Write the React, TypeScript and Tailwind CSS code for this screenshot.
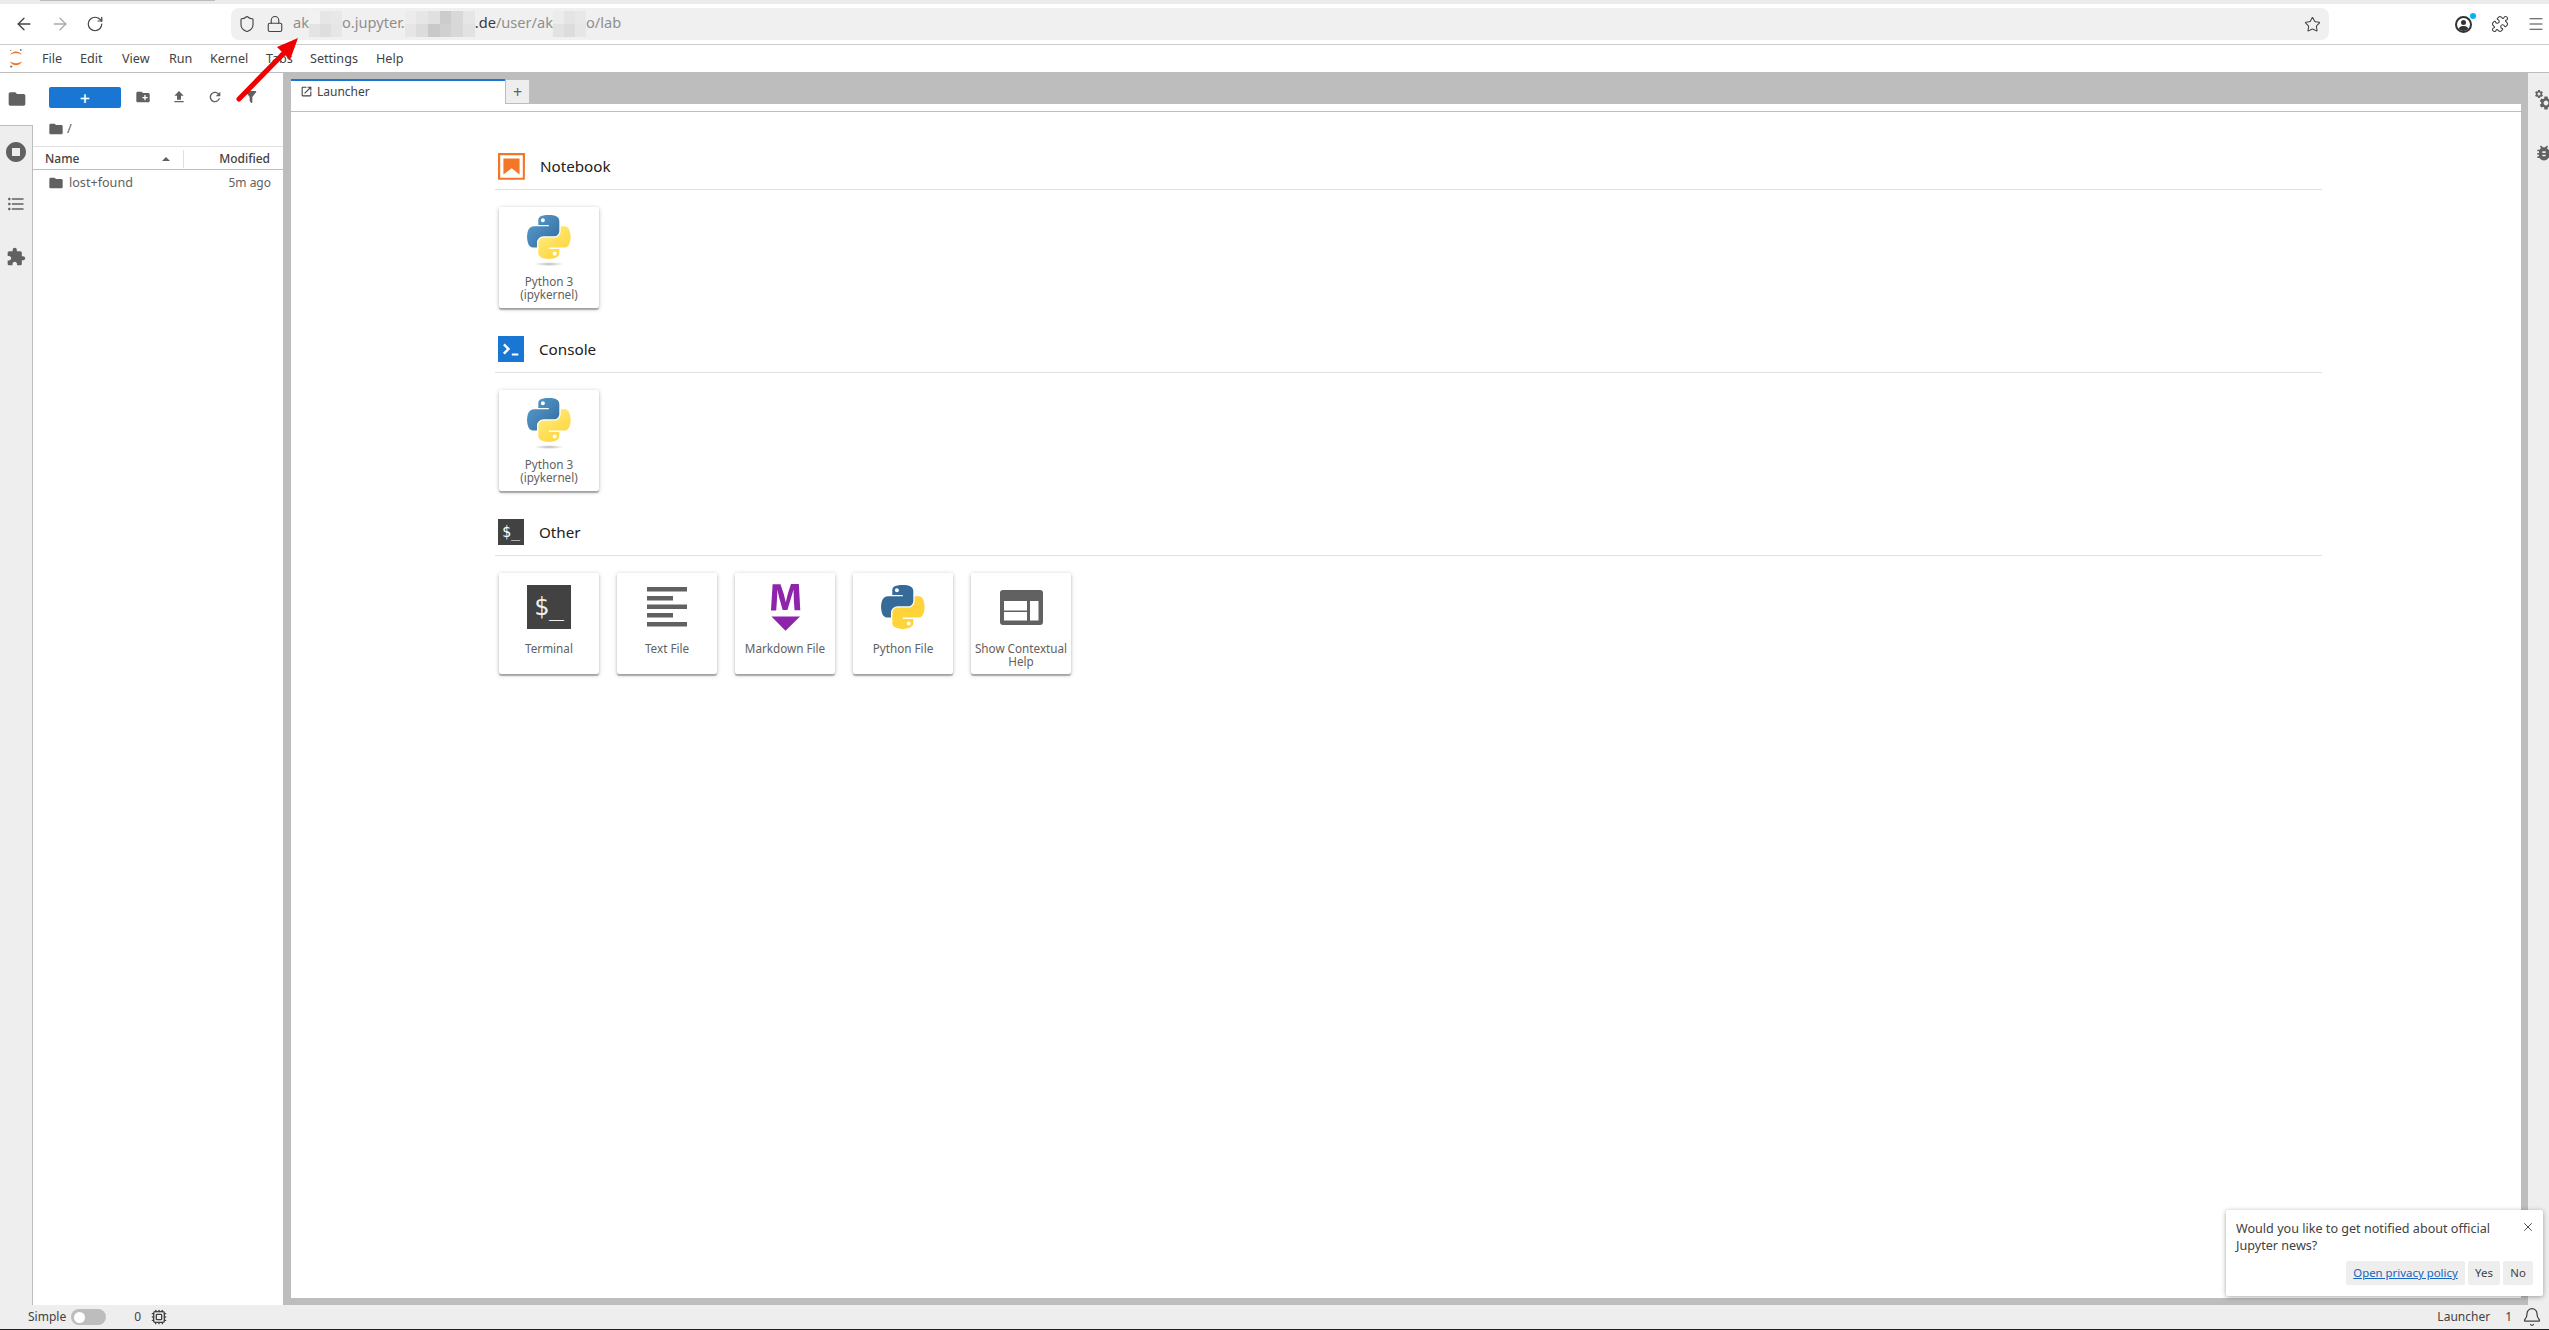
import {
  ArrowLeft,
  ArrowRight,
  Bell,
  Cpu,
  Lock,
  Menu,
  Puzzle,
  RotateCw,
  Shield,
  Star,
  X,
} from "lucide-react";
import { MdBugReport, MdSettings } from "react-icons/md";

const FOLDER = "M10 4H4c-1.1 0-1.99.9-1.99 2L2 18c0 1.1.9 2 2 2h16c1.1 0 2-.9 2-2V8c0-1.1-.9-2-2-2h-8l-2-2z";
const NEW_FOLDER = "M20 6h-8l-2-2H4c-1.11 0-1.99.89-1.99 2L2 18c0 1.11.89 2 2 2h16c1.11 0 2-.89 2-2V8c0-1.11-.89-2-2-2zm-1 8h-3v3h-2v-3h-3v-2h3V9h2v3h3v2z";
const UPLOAD = "M9 16h6v-6h4l-7-7-7 7h4v6zm-4 2h14v2H5v-2z";
const REFRESH = "M17.65 6.35C16.2 4.9 14.21 4 12 4c-4.42 0-7.99 3.58-7.99 8s3.57 8 7.99 8c3.73 0 6.84-2.55 7.73-6h-2.08c-.82 2.33-3.04 4-5.65 4-3.31 0-6-2.69-6-6s2.69-6 6-6c1.66 0 3.14.69 4.22 1.78L13 11h7V4l-2.35 2.35z";
const FILTER = "M14,12V19.88C14.04,20.18 13.94,20.5 13.71,20.71C13.32,21.1 12.69,21.1 12.3,20.71L10.29,18.7C10.06,18.47 9.96,18.16 10,17.87V12H9.97L4.21,4.62C3.87,4.19 3.95,3.56 4.38,3.22C4.57,3.08 4.78,3 5,3V3H19V3C19.22,3 19.43,3.08 19.62,3.22C20.05,3.56 20.13,4.19 19.79,4.62L14.03,12H14Z";
const STOP = "M12 2C6.48 2 2 6.48 2 12s4.48 10 10 10 10-4.48 10-10S17.52 2 12 2zm4 14H8V8h8v8z";
const LIST = "M4 10.5c-.83 0-1.5.67-1.5 1.5s.67 1.5 1.5 1.5 1.5-.67 1.5-1.5-.67-1.5-1.5-1.5zm0-6c-.83 0-1.5.67-1.5 1.5S3.17 7.5 4 7.5 5.5 6.83 5.5 6 4.83 4.5 4 4.5zm0 12c-.83 0-1.5.68-1.5 1.5s.68 1.5 1.5 1.5 1.5-.68 1.5-1.5-.67-1.5-1.5-1.5zM7 19h14v-2H7v2zm0-6h14v-2H7v2zm0-8v2h14V5H7z";
const EXTENSION = "M20.5 11H19V7c0-1.1-.9-2-2-2h-4V3.5C13 2.12 11.88 1 10.5 1S8 2.12 8 3.5V5H4c-1.1 0-1.99.9-1.99 2v3.8H3.5c1.49 0 2.7 1.21 2.7 2.7s-1.21 2.7-2.7 2.7H2V20c0 1.1.9 2 2 2h3.8v-1.5c0-1.49 1.21-2.7 2.7-2.7 1.49 0 2.7 1.21 2.7 2.7V22H17c1.1 0 2-.9 2-2v-4h1.5c1.38 0 2.5-1.12 2.5-2.5S21.88 11 20.5 11z";
const LAUNCH = "M19 19H5V5h7V3H5a2 2 0 00-2 2v14a2 2 0 002 2h14c1.1 0 2-.9 2-2v-7h-2v7zM14 3v2h3.59l-9.83 9.83 1.41 1.41L19 6.41V10h2V3h-7z";

const PY_BLUE = "M54.92 0C50.34.02 45.96.41 42.11 1.09 30.76 3.1 28.7 7.29 28.7 15.03v10.22h26.81v3.41H18.64c-7.79 0-14.62 4.68-16.75 13.59-2.46 10.21-2.57 16.58 0 27.24 1.91 7.93 6.46 13.59 14.25 13.59h9.22V70.83c0-8.85 7.66-16.66 16.75-16.66h26.78c7.46 0 13.41-6.14 13.41-13.62V15.03c0-7.26-6.13-12.71-13.41-13.94C64.28.33 59.5-.02 54.92 0zM40.42 8.22c2.77 0 5.03 2.3 5.03 5.12 0 2.82-2.26 5.1-5.03 5.1-2.78 0-5.03-2.28-5.03-5.1 0-2.82 2.25-5.12 5.03-5.12z";
const PY_YELLOW = "M85.64 28.66v11.9c0 9.23-7.83 17-16.75 17H42.11c-7.34 0-13.41 6.28-13.41 13.63v25.53c0 7.27 6.32 11.54 13.41 13.63 8.49 2.5 16.62 2.95 26.78 0 6.75-1.96 13.41-5.89 13.41-13.63V86.51H55.51v-3.4H95.7c7.79 0 10.7-5.44 13.41-13.6 2.8-8.4 2.68-16.47 0-27.23-1.93-7.75-5.6-13.62-13.41-13.62H85.64zM70.58 93.29c2.78 0 5.03 2.28 5.03 5.09 0 2.83-2.25 5.13-5.03 5.13-2.77 0-5.03-2.3-5.03-5.13 0-2.81 2.26-5.09 5.03-5.09z";

function Mat({ d, className }: { d: string; className: string }) {
  return (
    <svg viewBox="0 0 24 24" className={className} fill="currentColor">
      <path d={d} />
    </svg>
  );
}

function PythonLogo({ flat }: { flat?: boolean }) {
  return (
    <svg viewBox="0 0 112 130" className="w-[44px] h-[51px]">
      <defs>
        <linearGradient id="pyBlue" x1="0" y1="0" x2="1" y2="1">
          <stop offset="0" stopColor="#5a9fd4" />
          <stop offset="1" stopColor="#306998" />
        </linearGradient>
        <linearGradient id="pyYellow" x1="0.8" y1="0.9" x2="0.3" y2="0.2">
          <stop offset="0" stopColor="#ffd43b" />
          <stop offset="1" stopColor="#ffe873" />
        </linearGradient>
        <radialGradient id="pyShadow">
          <stop offset="0" stopColor="#b8b8b8" />
          <stop offset="1" stopColor="#ffffff" />
        </radialGradient>
      </defs>
      <path d={PY_BLUE} fill={flat ? "#366b99" : "url(#pyBlue)"} />
      <path d={PY_YELLOW} fill={flat ? "#ffd43b" : "url(#pyYellow)"} />
      {!flat && <ellipse cx="56" cy="125" rx="38" ry="5" fill="url(#pyShadow)" />}
    </svg>
  );
}

// pixelated patch that hides part of the url
function Blur({ className, cells }: { className: string; cells: string[] }) {
  return (
    <span className={`inline-grid h-[26px] align-middle ${className}`}>
      {cells.map((c, i) => (
        <span key={i} style={{ backgroundColor: c }} />
      ))}
    </span>
  );
}

function Card({ label, icon, top }: { label: string; icon: React.ReactNode; top: string }) {
  return (
    <div className="w-[100px] h-[101px] rounded-[2px] bg-white text-[#616161] shadow-[0_1px_4px_rgba(0,0,0,0.25),0_2px_1px_rgba(0,0,0,0.25)]">
      <div className={`flex justify-center ${top}`}>{icon}</div>
      <div className="text-[11.7px] leading-[13px] text-center">{label}</div>
    </div>
  );
}

function Section({
  title,
  icon,
  className,
  children,
}: {
  title: string;
  icon: React.ReactNode;
  className: string;
  children: React.ReactNode;
}) {
  return (
    <section className={`w-[1827px] mb-[28px] ${className}`}>
      <div className="h-[37px] pb-[10px] pl-[3px] flex items-center gap-[15px] border-b border-[#e0e0e0]">
        {icon}
        <span className="pt-px text-[15.2px] text-[#212121]">{title}</span>
      </div>
      <div className="mt-[17px] pl-[4px] flex gap-[18px]">{children}</div>
    </section>
  );
}

export default function App() {
  const python = <PythonLogo />;

  return (
    <div className="relative w-[2549px] h-[1330px] overflow-hidden flex flex-col bg-white font-['Noto_Sans',sans-serif] text-[#616161]">
      {/* browser chrome */}
      <div className="h-1 bg-[#ebebeb] pl-[40px]">
        <div className="w-[175px] h-px bg-[#bbbbbb]" />
      </div>
      <div className="h-[41px] flex items-center border-b border-[#cccccc] text-[#444]">
        <div className="w-[231px] pl-[14px] flex gap-[16px]">
          <ArrowLeft size={20} strokeWidth={1.6} />
          <ArrowRight size={20} strokeWidth={1.6} className="text-[#aaa]" />
          <RotateCw size={18} strokeWidth={1.6} className="mt-px" />
        </div>
        <div className="w-[2098px] h-8 rounded-[8px] bg-[#f0f0f0] flex items-center pl-[7px] pr-[8px]">
          <Shield size={18} strokeWidth={1.5} />
          <Lock size={18} strokeWidth={1.5} className="ml-[10px]" />
          <span className="ml-[9px] text-[14.6px] whitespace-nowrap text-[#8f8f8f]">
            ak
            <Blur className="w-[33px] grid-cols-3" cells={["#f2f2f2", "#e6e6e6", "#e8e8e8", "#e4e4e4", "#dedede", "#e6e6e6"]} />
            o.jupyter.
            <Blur
              className="w-[70px] grid-cols-6"
              cells={["#ececec", "#e6e6e6", "#e0e0e0", "#cccccc", "#d8d8d8", "#e6e6e6", "#e6e6e6", "#dcdcdc", "#c9c9c9", "#d0d0d0", "#d8d8d8", "#e2e2e2"]}
            />
            <span className="text-[#3a3a3a]">.de</span>/user/ak
            <Blur className="w-[33px] grid-cols-3" cells={["#ececec", "#e4e4e4", "#e8e8e8", "#e2e2e2", "#dcdcdc", "#e6e6e6"]} />
            o/lab
          </span>
          <Star size={17} strokeWidth={1.5} className="ml-auto" />
        </div>
        <div className="relative ml-[125px] w-5 h-5">
          <div className="w-[17px] h-[17px] mt-[2px] ml-px rounded-full border-2 border-[#333] flex flex-col items-center overflow-hidden">
            <div className="w-[5px] h-[5px] mt-[2px] rounded-full bg-[#333]" />
            <div className="w-[11px] h-[5px] mt-px rounded-t-full bg-[#333]" />
          </div>
          <div className="absolute -top-px right-[-2px] w-[6px] h-[6px] rounded-full bg-[#00b3f4]" />
        </div>
        <Puzzle size={18} strokeWidth={1.5} className="ml-[17px]" />
        <Menu size={18} strokeWidth={1.5} className="ml-[18px]" />
      </div>

      {/* jupyter menu */}
      <div className="h-[28px] flex items-center border-b border-[#bdbdbd] text-[12.6px] text-[#424242]">
        <svg viewBox="0 0 16 22" className="ml-2 mr-[18px] w-4 h-[21px]">
          <path d="M1.5 7.5C4 2.5 12 2.5 14.5 7.5 12 5 4 5 1.5 7.5z" fill="#f37726" />
          <path d="M1.5 14C4 19.5 12 19.5 14.5 14 12 16.5 4 16.5 1.5 14z" fill="#f37726" />
          <circle cx="13" cy="2" r="1" fill="#767677" />
          <circle cx="3" cy="19.5" r="1.2" fill="#767677" />
          <circle cx="2.5" cy="2.5" r=".6" fill="#767677" />
        </svg>
        <span className="w-[38px] pt-px">File</span>
        <span className="w-[42px] pt-px">Edit</span>
        <span className="w-[47px] pt-px">View</span>
        <span className="w-[41px] pt-px">Run</span>
        <span className="w-[56px] pt-px">Kernel</span>
        <span className="w-[44px] pt-px">Tabs</span>
        <span className="w-[66px] pt-px">Settings</span>
        <span className="pt-px">Help</span>
      </div>

      <div className="flex-1 min-h-0 flex">
        {/* activity bar */}
        <div className="w-[33px] flex flex-col">
          <div className="h-[52px] flex items-center justify-center">
            <Mat d={FOLDER} className="w-5 h-5" />
          </div>
          <div className="flex-1 bg-[#eeeeee] border-t border-r border-[#bdbdbd] flex flex-col items-center pt-[14px] gap-[29px] pr-px">
            <Mat d={STOP} className="w-6 h-6" />
            <Mat d={LIST} className="w-[20px] h-[20px] mt-px" />
            <Mat d={EXTENSION} className="w-5 h-5 mt-[4px]" />
          </div>
        </div>

        {/* file browser */}
        <div className="w-[250px] flex flex-col text-[12px]">
          <div className="h-[31px] mt-[14px] pl-[16px] flex items-start">
            <div className="w-[72px] h-[21px] rounded-[2px] bg-[#1976d2] text-white flex items-center justify-center text-[18px] leading-none font-medium">+</div>
            <Mat d={NEW_FOLDER} className="w-4 h-4 ml-[14px] mt-[2px]" />
            <Mat d={UPLOAD} className="w-4 h-4 ml-[20px] mt-[2px]" />
            <Mat d={REFRESH} className="w-4 h-4 ml-[20px] mt-[2px]" />
            <Mat d={FILTER} className="w-4 h-4 ml-[20px] mt-[2px]" />
          </div>
          <div className="h-[22px] mb-[6px] pl-[15px] flex items-center gap-[3px]">
            <Mat d={FOLDER} className="w-4 h-4" />
            <span className="text-[13px]">/</span>
          </div>
          <div className="h-[24px] pt-[2px] border-t border-b border-t-[#e0e0e0] border-b-[#bdbdbd] flex items-center text-[#424242]">
            <div className="w-[151px] h-[18px] pl-[12px] pr-[13px] flex items-center justify-between border-r border-[#e0e0e0]">
              <span className="font-medium">Name</span>
              <span className="w-0 h-0 border-x-[4px] border-x-transparent border-b-[4px] border-b-[#616161]" />
            </div>
            <span className="flex-1 pr-[13px] text-right font-medium">Modified</span>
          </div>
          <div className="h-[26px] pl-[15px] pr-[12px] flex items-center">
            <Mat d={FOLDER} className="w-4 h-4" />
            <span className="ml-[5px] text-[12.6px]">lost+found</span>
            <span className="ml-auto">5m ago</span>
          </div>
        </div>

        {/* main area */}
        <div className="flex-1 min-w-0 flex flex-col bg-[#bdbdbd] pl-[8px] pr-[7px] pb-[7px]">
          <div className="h-[31px] shrink-0 pt-[6px] flex">
            <div className="w-[214px] pb-[2px] bg-white border-t-2 border-[#1976d2] pl-[9px] flex items-center gap-[4px] text-[12px] text-[#424242]">
              <Mat d={LAUNCH} className="w-[13px] h-[13px]" />
              <span>Launcher</span>
            </div>
            <div className="w-[25px] bg-[#eeeeee] border border-[#bdbdbd] flex items-center justify-center text-[16px] leading-none">+</div>
          </div>
          <div className="flex-1 bg-white pt-[7px]">
            <div className="h-full border-t border-[#bdbdbd] pl-[204px] pt-[41px]">
              <Section
                title="Notebook"
                className=""
                icon={
                  <svg viewBox="1.8 1.8 18.4 18.4" className="w-[27px] h-[27px]" fill="#f37726">
                    <path d="M18.7 3.3v15.4H3.3V3.3h15.4m1.5-1.5H1.8v18.3h18.3l.1-18.3z" />
                    <path d="M16.5 16.5l-5.4-4.3-5.6 4.3v-11h11z" />
                  </svg>
                }
              >
                <Card label="Python 3 (ipykernel)" top="h-[68px] pt-2" icon={python} />
              </Section>
              <Section
                title="Console"
                className=""
                icon={
                  <svg viewBox="20 20 160 160" className="w-[26px] h-[26px]">
                    <path d="M20 20h160v160H20z" fill="#1976d2" />
                    <path d="M105 127.3h40v12.8h-40zM51.1 77L74 99.9l-23.3 23.3 10.5 10.5 23.3-23.3L95 99.9 84.5 89.4 61.6 66.5z" fill="#fff" />
                  </svg>
                }
              >
                <Card label="Python 3 (ipykernel)" top="h-[68px] pt-2" icon={python} />
              </Section>
              <Section
                title="Other"
                className="mt-px"
                icon={
                  <div className="w-[26px] h-[26px] bg-[#424242] text-white text-[15px] leading-[26px] text-center font-['DejaVu_Sans_Mono',monospace]">
                    $_
                  </div>
                }
              >
                <Card
                  label="Terminal"
                  top="h-[69px] pt-3"
                  icon={
                    <div className="w-[44px] h-[44px] bg-[#424242] text-[#eeeeee] text-[25px] leading-[44px] text-center font-['DejaVu_Sans_Mono',monospace]">
                      $_
                    </div>
                  }
                />
                <Card
                  label="Text File"
                  top="h-[69px] pt-[14px]"
                  icon={
                    <svg viewBox="0 0 40 40" className="w-[40px] h-[40px]" fill="#616161">
                      <rect y="0" width="40" height="4.5" />
                      <rect y="9" width="26" height="4.5" />
                      <rect y="17.5" width="40" height="4.5" />
                      <rect y="26" width="26" height="4.5" />
                      <rect y="35" width="40" height="4.5" />
                    </svg>
                  }
                />
                <Card
                  label="Markdown File"
                  top="h-[69px] pt-[11px]"
                  icon={
                    <svg viewBox="4.4 1.3 13 19.7" className="w-[31px] h-[47px]" fill="#8e24aa">
                      <path d="M5 14.9h12l-6.1 6zm9.4-6.8c0-1.3-.1-2.9-.1-4.5-.4 1.4-.9 3-1.3 4.3l-1.3 4.3h-2L8.5 7.9c-.4-1.3-.7-2.9-1-4.3-.1 1.6-.1 3.2-.2 4.6L7 12.4H4.8l.7-11h3.3L10 5c.4 1.2.7 2.7 1 3.9.3-1.2.7-2.6 1-3.9l1.2-3.7h3.3l.6 11h-2.4l-.3-4.2z" />
                    </svg>
                  }
                />
                <Card label="Python File" top="h-[69px] pt-3" icon={<PythonLogo flat />} />
                <Card
                  label="Show Contextual Help"
                  top="h-[69px] pt-[17px]"
                  icon={
                    <svg viewBox="0 0 43 35" className="w-[43px] h-[35px]">
                      <rect width="43" height="35" rx="3" fill="#616161" />
                      <rect x="4" y="11" width="23" height="9.5" fill="#fff" />
                      <rect x="4" y="22" width="23" height="8.5" fill="#fff" />
                      <rect x="30" y="11" width="8.5" height="19.5" fill="#fff" />
                    </svg>
                  }
                />
              </Section>
            </div>
          </div>
        </div>

        {/* right sidebar, cut off by the window */}
        <div className="w-[21px] shrink-0 bg-[#eeeeee] overflow-hidden relative">
          <MdSettings className="absolute left-[10px] top-[22px] w-4 h-4" />
          <MdSettings className="absolute left-[6px] top-[16px] w-[10px] h-[10px]" />
          <MdBugReport className="absolute left-[6px] top-[70px] w-[20px] h-[20px]" />
        </div>
      </div>

      {/* status bar */}
      <div className="h-[25px] shrink-0 bg-[#eeeeee] border-b border-[#222] flex items-center text-[12px] text-[#424242]">
        <span className="ml-[28px]">Simple</span>
        <div className="ml-[5px] w-[35px] h-4 rounded-full bg-[#bdbdbd] pl-[3px] flex items-center">
          <div className="w-[11px] h-[11px] rounded-full bg-white" />
        </div>
        <span className="ml-[28px]">0</span>
        <Cpu size={16} strokeWidth={2} className="ml-[10px]" />
        <span className="ml-auto">Launcher</span>
        <span className="ml-[15px]">1</span>
        <Bell size={20} strokeWidth={1.5} className="ml-[10px] mr-[7px]" />
      </div>

      {/* notification */}
      <div className="absolute left-[2226px] top-[1210px] w-[317px] h-[86px] rounded-[2px] bg-white shadow-[0_1px_5px_rgba(0,0,0,0.35)] text-[12.6px] leading-[17px] text-[#424242]">
        <p className="pl-[10px] pt-[10px] w-[280px]">Would you like to get notified about official Jupyter news?</p>
        <X size={14} strokeWidth={1.6} className="absolute right-[8px] top-[10px]" />
        <div className="absolute right-[10px] bottom-[11px] flex gap-[3px] text-[11.4px] h-6 leading-6 text-center">
          <a className="w-[119px] bg-[#eeeeee] rounded-[2px] underline text-[#1565c0]">Open privacy policy</a>
          <span className="w-[32px] bg-[#eeeeee] rounded-[2px]">Yes</span>
          <span className="w-[30px] bg-[#eeeeee] rounded-[2px]">No</span>
        </div>
      </div>

      {/* red annotation arrow */}
      <svg viewBox="0 0 80 80" className="absolute left-[230px] top-[30px] w-20 h-20">
        <path d="M9 69L56 21" stroke="#f00000" strokeWidth="5" strokeLinecap="round" />
        <path d="M68 8L47 17 60 30z" fill="#f00000" />
      </svg>
    </div>
  );
}
